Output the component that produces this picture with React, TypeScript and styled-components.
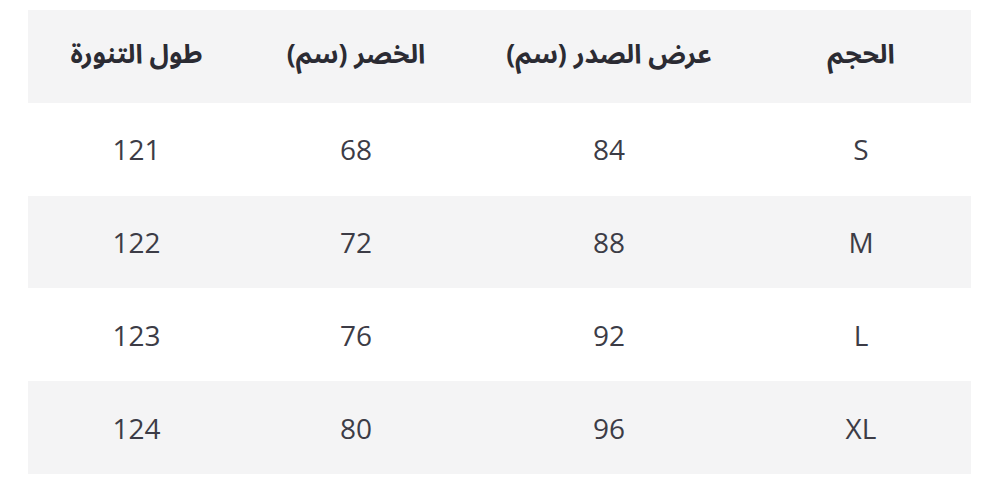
import React from "react";
import styled, { createGlobalStyle } from "styled-components";

const Global = createGlobalStyle`
  html, body { margin: 0; padding: 0; background: #ffffff; }
  body { width: 1000px; height: 491px; overflow: hidden; }
`;

const Page = styled.div`
  padding: 10px 28px 0 28px;
  width: 1000px;
  box-sizing: border-box;
`;

const Table = styled.div`
  direction: rtl;
  display: grid;
  grid-template-columns: 220px 284px 222px 217px;
  width: 943px;
`;

const Row = styled.div<{ $shade: boolean }>`
  display: contents;
  & > div {
    background: ${(p) => (p.$shade ? "#f4f4f5" : "#ffffff")};
  }
`;

const HeadCell = styled.div`
  height: 92.8px;
  display: flex;
  align-items: center;
  justify-content: center;
  font-family: "Noto Sans Arabic", "Noto Sans", "DejaVu Sans", sans-serif;
  font-weight: 700;
  font-size: 26.5px;
  color: #2b2b33;
  padding-bottom: 2px;
  box-sizing: border-box;
`;

const Cell = styled.div`
  height: 92.8px;
  display: flex;
  align-items: center;
  justify-content: center;
  font-family: "Open Sans", "Noto Sans", sans-serif;
  font-size: 28px;
  color: #3c3c46;
`;

const headers = ["الحجم", "عرض الصدر (سم)", "الخصر (سم)", "طول التنورة"];
const rows = [
  ["S", "84", "68", "121"],
  ["M", "88", "72", "122"],
  ["L", "92", "76", "123"],
  ["XL", "96", "80", "124"],
];

export default function App() {
  return (
    <>
      <Global />
      <Page>
        <Table>
          <Row $shade={true}>
            {headers.map((h) => (
              <HeadCell key={h}>{h}</HeadCell>
            ))}
          </Row>
          {rows.map((r, i) => (
            <Row key={i} $shade={i % 2 === 1}>
              {r.map((c, j) => (
                <Cell key={j}>{c}</Cell>
              ))}
            </Row>
          ))}
        </Table>
      </Page>
    </>
  );
}
